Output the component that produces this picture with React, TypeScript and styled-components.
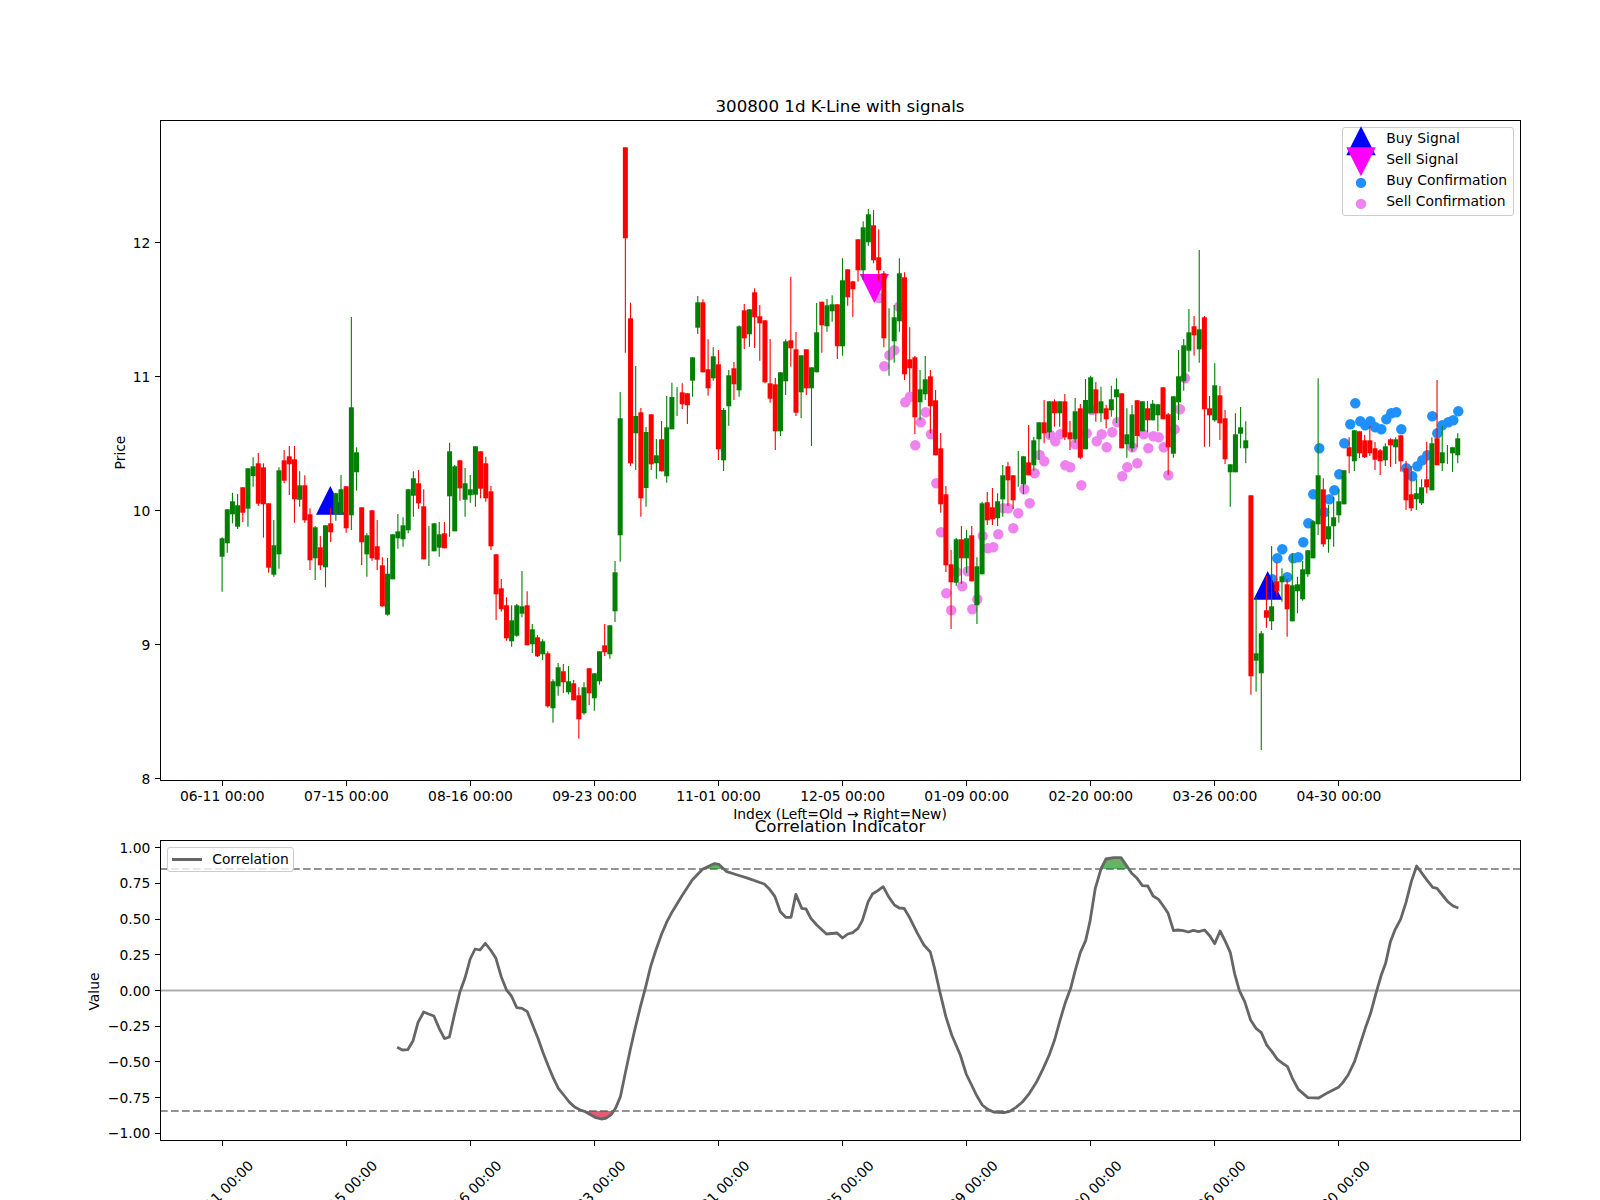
import React from 'react';
import styled, { createGlobalStyle } from 'styled-components';

// one row per trading day: colour, wick top, body top, body bottom, wick bottom (px)
type Candle = ['g' | 'r', number, number, number, number];

const candles: Candle[] = [
  ['g',537.3,538.3,556.7,591.7],['g',509.3,509.3,543.3,552.7],['g',492.7,501.3,514.3,523.3],['g',494,505.3,526.7,529],
  ['r',487.3,487.3,512.7,522],['g',468.3,468.3,508.7,526.7],['g',457.3,466.3,476,486.7],['r',453,463.3,503.7,506],
  ['r',463.3,467.3,504.3,537.7],['r',503.3,503.3,567.7,572.7],['g',520,545.3,574.7,576.7],['g',467.3,470.3,554.3,568.7],
  ['r',450,460.3,480.7,483.3],['r',446,456.3,464.3,495],['r',446,459.3,499.3,522.7],['g',471.3,485.3,499.7,506.7],
  ['r',475.3,485.3,520.3,522.7],['r',508.3,514.3,560.3,570],['g',526,527.3,558.3,580],['r',536,547.3,565.3,570],
  ['g',525.3,525.3,567.3,587.3],['r',508,523.3,532.3,542],['g',492.7,493.3,514.3,520.7],['g',475,489.3,514.3,514.3],
  ['r',486.3,486.3,528.3,532.7],['g',317,407.3,515.3,530],['g',447.3,452.3,472.3,490.7],['r',507.3,507.3,542.3,565],
  ['g',533.3,535.3,554.3,576.7],['r',510.3,510.3,558.3,560.7],['r',520,546.3,559.7,570],['r',557.3,565.3,606.3,606.7],
  ['g',558,573.7,614.7,615.7],['g',534.3,534.3,579.3,579.3],['g',514,531.3,538.3,548.7],['g',517.3,525.3,539.3,546.7],
  ['g',489.3,489.3,530.3,533.3],['g',471.3,478.3,495.7,516.7],['r',470,483.3,503.3,508.7],['r',489.3,506.3,559.3,559.3],
  ['g',526,546,546,566],['g',523.3,523.3,551.3,551.3],['g',522,534.3,547.7,556.7],['r',522,533.3,548.3,548.3],
  ['g',442.7,451.3,496.3,536.7],['g',465,466.3,531.3,531.3],['r',460.3,460.3,488.3,500.7],['g',468,483.3,499.7,516.7],
  ['g',475,489.3,495.3,502.7],['g',446,446.3,494.7,506.7],['r',451.3,451.3,488.7,498.3],['r',456.7,463.3,498.3,501.7],
  ['r',486,491.3,546.3,550],['r',554.3,554.3,594.3,620],['r',579,588.3,609.3,611.7],['r',597.3,605.3,638.3,640.7],
  ['g',605.3,620.3,641.3,646.7],['g',604,605.3,635.7,636.7],['g',571,606.3,613.7,617.3],['r',591.3,605.3,645.3,645.3],
  ['g',624,629.3,644.3,653],['r',635,637.3,656.3,657],['g',639.3,641.3,654.3,660],['r',651.3,653.3,706.3,707.7],
  ['g',679.3,681.3,708.3,722.7],['g',663,667.3,686.3,695.7],['r',664,671.3,682.3,693],['g',666,681.3,692.3,694.3],
  ['r',680,683.3,700.3,700.3],['r',687.3,695.3,719.3,738.7],['g',682.3,687.3,713.3,714.7],['r',668.3,668.3,693.3,705],
  ['g',673.3,673.3,698.3,710.7],['g',651.3,651.3,681.3,684.7],['r',624,645.3,652.3,656],['g',625.3,625.3,654.3,658.7],
  ['g',561,572.3,611.3,622],['g',392,418.3,535.3,561.7],['r',147.3,147.3,238.3,352.7],['r',302.7,318.3,463.3,466],
  ['g',366,416,433.3,470],['r',408,412.3,498.3,516.7],['g',427,432,488,506.7],['r',414,414.3,464.3,470],
  ['g',439,455.3,463.3,478.7],['r',421,439.3,471.3,471.3],['g',396,427.3,476.3,482.7],['g',382.7,397,429.3,429.3],
  ['g',387,401,401,416],['r',383.3,392.3,404.3,409],['r',393.3,393.3,405.3,424],['g',357.3,357.3,380.7,396.7],
  ['g',296,302.3,327.7,334],['r',299.3,302.3,372.3,372.3],['r',339.3,369.3,388.3,395.7],['g',347.3,356.3,378.3,380.7],
  ['r',350,364.3,449.3,460],['g',408,410,460.3,471],['g',370,375.3,406.3,425.7],['r',362,368.3,384.3,400],
  ['g',325.3,326.3,390.3,396.7],['r',304,310.3,338.3,349],['g',309.3,309.3,334.3,346.7],['r',288.3,292.3,317.3,348],
  ['r',305,316.3,323.3,360.7],['r',320.3,320.3,382.3,383.3],['r',339,383.3,398.7,402.7],['r',378,384.3,431.3,450],
  ['g',372.3,372.3,431.3,436],['g',339.3,341.3,381.3,395],['r',276.7,340.3,348.3,366.7],['r',332,349.3,412.7,416],
  ['g',355.3,355.3,392.3,418],['r',349.3,349.3,388.3,395],['g',367.3,367.3,388.3,446],['g',303,332.3,372.3,372.3],
  ['r',301.7,301.7,325.3,352.7],['g',299,305.3,326.3,331.7],['g',295.3,304.3,311.3,321.7],['r',304.3,304.3,346.3,359],
  ['g',258.3,280.3,346.3,355.7],['r',269.3,269.3,297.3,305.7],['r',281.3,281.3,289.3,317],['r',239.3,239.3,270.3,281.7],
  ['g',221.3,227.3,270.3,280],['g',209,214.3,242.3,245.7],['r',210,225.3,260.3,263.3],['r',229.3,257.3,270.3,281],
  ['r',271,273.3,338.3,347.3],['g',308.3,342,342,375.7],['g',305,317.3,341.3,362.7],['g',258.3,273.3,321.3,331.7],
  ['r',272.3,277.3,374.3,380],['r',327.3,359.3,368.3,391.7],['r',356,357.3,417.3,434],['g',370,389.3,402.3,420],
  ['g',356,379.3,394.3,400],['r',370,376.3,406.3,433.3],['r',390,400.3,455.3,455.3],['r',433,448.3,504.3,512.7],
  ['r',486,494.3,565.3,572],['r',550,564.3,582.3,629],['g',538,539.3,582.7,585.7],['r',526,539.3,558.3,584],
  ['g',530,538.3,558.3,573],['r',526,535.3,581.3,581.3],['g',557.3,566.3,605.3,624],['g',501.7,503.3,574.3,574.3],
  ['r',492,502.3,520.3,525],['r',488,507.3,519.3,525],['g',493.3,501.3,518.3,526],['g',465,475.3,499.3,516.7],
  ['r',462,466.3,480.3,506],['r',475.3,475.3,500.3,509],['g',451,468,468,486.7],['g',456.3,456.3,484.3,494.3],
  ['r',425,462.3,475.3,475.3],['g',437,440.3,465.3,470.7],['g',422.3,422.3,439.3,460],['r',400,422.3,433.3,443.3],
  ['g',401.3,401.3,432.3,438.3],['r',399.3,401.3,413.3,426.7],['g',401.3,401.3,413.3,426.7],['r',394,401.3,437.3,440],
  ['r',421,432.3,439.3,450],['g',398,411.3,439.3,442.7],['r',404,408.3,457.7,459.3],['g',379,400,449.3,449.3],
  ['g',375.7,377.3,413.3,413.3],['r',382,389.3,413.3,421.7],['g',386.7,401.3,413.3,422],['r',405,408.3,419.3,428.3],
  ['g',385.7,399.3,410.3,416.7],['g',378.3,389.3,397.3,423],['r',393.3,393.3,448.3,448.3],['g',408.3,434.3,444.3,457.7],
  ['g',405,414.3,448.3,451.7],['r',400,400.3,436,447.3],['g',401.3,401.3,431.3,431.3],['r',401,408.3,420.3,432.3],
  ['g',400,403.7,420.3,420.3],['g',404,404.3,415.3,431.3],['r',387,387.3,419.3,419.3],['r',413,414.3,447.3,475],
  ['g',396.3,396.3,453.7,457.7],['g',350,376.3,402.3,420],['g',339,345.3,381.3,390.7],['g',309,332.3,350.7,371.7],
  ['r',316,326.3,335.3,355.7],['g',250,329.3,349.3,362.7],['r',316,317.3,409.3,446.7],['r',396,408.3,415.3,446.7],
  ['g',363.3,385.3,420.3,421.7],['r',386,395.3,423.3,440],['r',410,418.3,459.3,464],['g',464.3,464.3,472.3,506.7],
  ['g',413.3,434.3,472.3,472.3],['g',407,427.3,433.7,448.3],['g',421.3,440.3,448.3,463.3],['r',495.3,495.3,676.3,694.7],
  ['g',596.7,653.3,660.7,691.7],['g',631,633.3,673.3,750],['r',576,610.3,617.7,627.7],['g',546,606.3,621.3,630],
  ['r',562.7,581.3,591.3,596.7],['g',568.3,576.3,582.3,601.7],['r',579,584.3,609.3,636.7],['g',553.3,585.3,621.3,621.3],
  ['g',576.7,584.3,591.3,613.3],['g',561,569.3,599.3,600.7],['g',550.3,550.3,574.3,576.7],['g',520,521.3,558.3,558.3],
  ['g',378.3,475.3,524.3,535],['r',478.3,489.3,544.3,546.7],['g',505,526.3,539.3,552.7],['g',497,517.3,526.3,546.7],
  ['g',489.3,501.3,515.3,522.7],['g',470.3,470.3,504.3,504.3],['r',437.3,447.3,456.3,473.3],['g',430.3,430.3,461.3,471],
  ['r',431.3,431.3,453.3,458],['r',435,440.3,457.3,458],['r',426,440.3,453.3,456],['r',442,448.3,459.7,470],
  ['r',449,450.3,461.3,475],['g',443.3,446.3,460.3,466],['r',438.3,439.3,445.3,466.7],['g',437.3,439.3,447.3,464],
  ['r',435.3,435.3,461.3,471.7],['r',461,468.3,500.3,510],['r',466,494.3,508.3,511],['g',479.3,493.3,499.3,510],
  ['g',479.3,487.3,503.3,505],['r',441.7,479.3,487.3,493.3],['g',437.3,443.3,490.3,490.3],['r',380,438.3,465.3,465.3],
  ['g',426,452.3,463.3,471],['g',445,455,455,464],['g',446.7,447.3,453.3,472],['g',433.3,438.3,455.3,463.3],
];

const sellDots = [
  [879,298],[884.3,366.3],[889.3,355.3],[894.3,350.3],[899,306.7],[905.3,402.3],[910,396.7],[915.3,445.3],[920.7,422.3],
  [925.7,412.3],[931,434.3],[936.3,483.3],[941,532.3],[946.3,593.3],[951.3,610.3],[956.7,572],[962.3,586.3],[967.7,571.3],
  [972.3,609.3],[977.3,599.3],[982.7,536],[987.7,548.3],[993.3,547.3],[998.3,534.3],[1003.3,508.3],[1008.3,508.3],
  [1013.3,528.3],[1018.3,513.3],[1024.3,489.3],[1029.7,503.3],[1034.7,473.3],[1039.7,455],[1044.3,461.3],[1050.3,435],
  [1055.3,441.3],[1060.3,434.3],[1065.3,465.3],[1070.3,467.3],[1075.3,444.3],[1081.3,485.3],[1086.7,433.3],[1091.7,410],
  [1096.7,441.3],[1101.7,434.3],[1106.7,447.3],[1112.3,432.3],[1117.3,422.3],[1122.3,476.3],[1127.3,467.3],[1132.3,447.3],
  [1137.3,463.3],[1143.7,434.3],[1148.3,448.3],[1153.3,436.3],[1158.7,437.3],[1163.7,447.3],[1168.3,475.3],[1174.7,429.3],
  [1180,409.3],[1185,378.3],
];

const buyDots = [
  [1272.3,579.3],[1277.3,558.3],[1282.3,549.3],[1287.3,577.3],[1293.3,558.3],[1298.3,557.3],[1303.3,542.3],[1308.3,523.3],
  [1313.3,494.3],[1319.3,448.3],[1324.3,512.3],[1329.3,499.3],[1334.3,490.3],[1339.3,474.3],[1344.3,443.3],[1350.3,424.3],
  [1355.3,403.3],[1360.3,421.3],[1365.3,425.3],[1370.3,421.3],[1375.3,427.3],[1381.3,429.3],[1386.3,419.3],[1391.3,413.3],
  [1396.3,412.3],[1401.3,429.3],[1406.3,468.3],[1412.3,476.3],[1417.3,466.3],[1422.3,460.3],[1427.3,455.3],[1432.3,416.3],
  [1437.3,433.3],[1442.3,425.3],[1448.3,422.3],[1453.3,420.3],[1458.3,411.3],
];

// correlation curve, traced in two stretches
const curveLeft = [
  [777,802],[790,810],[803,809],[816,782],[828,728],[842,696],[854,702],[867,708],[880,745],[893,776],[905,771],[918,700],
  [931,635],[943,595],[956,537],[968,507],[980,510],[993,490],[1006,510],[1019,535],[1032,590],[1045,630],[1057,648],
  [1070,683],[1083,685],[1096,695],[1109,735],[1122,775],[1135,820],[1148,860],[1160,895],[1172,925],[1187,948],[1200,968],
  [1213,982],[1226,990],[1238,995],[1251,1004],[1264,1013],[1277,1017],[1290,1014],[1302,1003],[1312,985],[1324,950],
  [1335,885],[1348,810],[1360,745],[1373,680],[1385,625],[1398,560],[1411,510],[1425,462],[1438,425],[1451,395],[1476,345],
  [1500,300],[1525,268],[1553,251],
].map(([x, y]) => [80 + x / 2.45, 780 + y / 3]);

const curveRight = [
  [27,251],[35,253],[50,275],[70,285],[90,295],[120,312],[130,328],[140,350],[150,395],[160,412],[170,412],[179,343],[190,385],
  [198,387],[207,415],[218,435],[236,462],[256,459],[266,474],[276,462],[285,458],[295,445],[303,422],[314,365],[322,342],
  [332,332],[342,320],[352,350],[363,375],[372,384],[381,385],[392,415],[406,460],[418,495],[430,516],[438,565],[447,630],
  [459,710],[470,765],[486,825],[497,882],[507,915],[516,945],[527,975],[537,988],[548,996],[568,998],[578,994],[590,982],
  [602,966],[615,940],[628,907],[640,868],[652,825],[662,780],[672,722],[682,668],[692,625],[700,575],[710,518],[720,482],
  [728,425],[738,325],[749,265],[758,237],[772,233],[786,233],[796,256],[806,280],[816,295],[826,317],[836,318],[846,348],
  [856,358],[865,378],[874,400],[884,452],[892,450],[902,452],[912,456],[921,451],[931,455],[942,450],[952,468],[961,491],
  [971,453],[981,485],[990,517],[998,580],[1007,632],[1017,665],[1028,720],[1038,745],[1048,758],[1058,795],[1068,815],
  [1078,838],[1088,850],[1097,860],[1106,895],[1117,928],[1135,953],[1155,954],[1172,938],[1192,922],[1200,908],[1210,885],
  [1222,845],[1232,795],[1242,745],[1252,700],[1262,640],[1272,585],[1280,550],[1289,485],[1298,448],[1308,418],[1318,368],
  [1328,305],[1338,258],[1348,280],[1358,302],[1368,322],[1376,325],[1386,345],[1396,365],[1406,378],[1416,384],
].map(([x, y]) => [700 + x / 1.867, 780 + y / 3]);

const curve = [...curveLeft, ...curveRight];

const dateLabels = ['06-11', '07-15', '08-16', '09-23', '11-01', '12-05', '01-09', '02-20', '03-26', '04-30'];
const tickX = (i: number) => 222.3 + i * 124.07;
const candleX = (i: number) => 222.1 + i * 5.17;
const priceY = (p: number) => 510.3 - 134 * (p - 10);
const valueY = (v: number) => 990.5 - 142.7 * v;
const snap = (n: number) => Math.floor(n) + 0.5;
const toPoints = (pts: number[][]) => pts.map((p) => p.join(',')).join(' ');

// stretches of the curve that go past a level, closed along that level
function pastLevel(level: number, above: boolean) {
  const out: number[][][] = [];
  let run: number[][] = [];
  curve.forEach(([x, y], i) => {
    const past = above ? y < level : y > level;
    if (past) {
      if (!run.length && i > 0) {
        const [px, py] = curve[i - 1];
        run.push([px + ((level - py) / (y - py)) * (x - px), level]);
      }
      run.push([x, y]);
    } else if (run.length) {
      const [px, py] = curve[i - 1];
      run.push([px + ((level - py) / (y - py)) * (x - px), level]);
      out.push(run);
      run = [];
    }
  });
  return out;
}

const GlobalStyle = createGlobalStyle`
  html, body {
    margin: 0;
    padding: 0;
    background: #fff;
    overflow: hidden;
  }
  body {
    font-family: "DejaVu Sans", sans-serif;
  }
`;

const Figure = styled.div`
  width: 1600px;
  height: 1200px;
  display: flex;
  flex-direction: column;
  overflow: hidden;
`;

const Panel = styled.section<{ $height: number }>`
  position: relative;
  flex: 0 0 ${({ $height }) => $height}px;
`;

const ChartSvg = styled.svg`
  display: block;
  width: 1600px;
  height: 100%;
  overflow: visible;
`;

const AxesFrame = styled.rect`
  fill: none;
  stroke: #000;
  stroke-width: 1;
`;

const Tick = styled.line`
  stroke: #000;
  stroke-width: 1;
`;

const Label = styled.text<{ $anchor?: string }>`
  font-family: "DejaVu Sans", sans-serif;
  font-size: 13.89px;
  fill: #000;
  text-anchor: ${({ $anchor }) => $anchor || 'middle'};
`;

const Title = styled(Label)`
  font-size: 16.67px;
`;

const RefLine = styled.line<{ $dashed?: boolean }>`
  stroke: ${({ $dashed }) => ($dashed ? '#939393' : '#adadad')};
  stroke-width: 2.1;
  stroke-dasharray: ${({ $dashed }) => ($dashed ? '7.7 3.3' : 'none')};
`;

const CurveLine = styled.polyline`
  fill: none;
  stroke: #666;
  stroke-width: 2.8;
  stroke-linejoin: round;
`;

const Legend = styled.div<{ $top: number; $left: number }>`
  position: absolute;
  top: ${({ $top }) => $top}px;
  left: ${({ $left }) => $left}px;
  box-sizing: border-box;
  background: rgba(255, 255, 255, 0.8);
  border: 1px solid #ccc;
  border-radius: 3px;
  font-size: 13.89px;
  color: #000;
`;

const SignalLegend = styled(Legend)`
  width: 171.5px;
  height: 88.5px;
  padding-left: 3px;
  display: flex;
  flex-direction: column;
`;

const CorrelationLegend = styled(Legend)`
  width: 127.3px;
  height: 24.8px;
  padding-left: 4.3px;
  display: flex;
  align-items: center;
  gap: 10.5px;
`;

const LegendRow = styled.div`
  display: flex;
  align-items: center;
  height: 20.9px;
  gap: 10px;
  white-space: nowrap;
`;

const LegendMark = styled.svg`
  flex: 0 0 30px;
  width: 30px;
  height: 20.9px;
  overflow: visible;
`;

const LegendStroke = styled.span`
  flex: 0 0 29.4px;
  height: 3px;
  background: #666;
`;

const legendRows = [
  { label: 'Buy Signal', mark: <polygon points="15,-1.7 29.7,27.3 0.3,27.3" fill="#0000ff" /> },
  { label: 'Sell Signal', mark: <polygon points="0.3,-1.7 29.7,-1.7 15,27.3" fill="#ff00ff" /> },
  { label: 'Buy Confirmation', mark: <circle cx="15" cy="12.9" r="5.2" fill="#1e90ff" /> },
  { label: 'Sell Confirmation', mark: <circle cx="15" cy="12.9" r="5.2" fill="#ee82ee" /> },
];

const PriceChart = () => (
  <ChartSvg viewBox="0 0 1600 820">
    <Title x={840} y={111.7}>300800 1d K-Line with signals</Title>
    {sellDots.map(([x, y]) => <circle key={x} cx={x} cy={y} r={5.2} fill="#ee82ee" />)}
    {buyDots.map(([x, y]) => <circle key={x} cx={x} cy={y} r={5.2} fill="#1e90ff" />)}
    <polygon points="330.3,486 344.7,514.7 316,514.7" fill="#0000ff" />
    <polygon points="1267.7,571 1282.3,599.7 1253.3,599.7" fill="#0000ff" />
    <polygon points="859.7,274 889,274 874.3,303" fill="#ff00ff" />
    {candles.map(([c, high, top, bottom, low], i) => {
      const x = candleX(i);
      const color = c === 'g' ? '#008000' : '#ff0000';
      return (
        <g key={i} fill={color} stroke={color}>
          <line x1={x} x2={x} y1={high} y2={low} strokeWidth={1.1} />
          {bottom > top && <rect x={x - 2.5} y={top} width={5} height={bottom - top} stroke="none" />}
        </g>
      );
    })}
    <AxesFrame x={160.5} y={120.5} width={1360} height={660} />
    {[8, 9, 10, 11, 12].map((p) => (
      <g key={p}>
        <Tick x1={155} x2={160} y1={snap(priceY(p))} y2={snap(priceY(p))} />
        <Label $anchor="end" x={150.3} y={priceY(p) + 5.5}>{p}</Label>
      </g>
    ))}
    {dateLabels.map((d, i) => (
      <g key={d}>
        <Tick x1={snap(tickX(i))} x2={snap(tickX(i))} y1={781} y2={786} />
        <Label x={tickX(i)} y={801}>{d} 00:00</Label>
      </g>
    ))}
    <Label x={840} y={819}>Index (Left=Old → Right=New)</Label>
    <Label transform="rotate(-90 119.5 452.5)" x={119.5} y={457.5}>Price</Label>
  </ChartSvg>
);

const IndicatorChart = () => (
  <ChartSvg viewBox="0 820 1600 380">
    <Title x={840} y={832}>Correlation Indicator</Title>
    <RefLine x1={160} x2={1520} y1={valueY(0)} y2={valueY(0)} />
    <RefLine $dashed x1={160} x2={1520} y1={869} y2={869} />
    <RefLine $dashed x1={160} x2={1520} y1={1111} y2={1111} />
    {pastLevel(869, true).map((run, i) => (
      <polygon key={i} points={toPoints(run)} fill="#008000" fillOpacity={0.6} />
    ))}
    {pastLevel(1111, false).map((run, i) => (
      <polygon key={i} points={toPoints(run)} fill="#dc143c" fillOpacity={0.7} />
    ))}
    <CurveLine points={toPoints(curve)} />
    <AxesFrame x={160.5} y={840.5} width={1360} height={300} />
    {[1, 0.75, 0.5, 0.25, 0, -0.25, -0.5, -0.75, -1].map((v) => (
      <g key={v}>
        <Tick x1={155} x2={160} y1={snap(valueY(v))} y2={snap(valueY(v))} />
        <Label $anchor="end" x={150.3} y={valueY(v) + 5}>
          {v < 0 ? '\u2212' : ''}{Math.abs(v).toFixed(2)}
        </Label>
      </g>
    ))}
    {dateLabels.map((d, i) => {
      const cx = tickX(i) - 1.5;
      return (
        <g key={d}>
          <Tick x1={snap(tickX(i))} x2={snap(tickX(i))} y1={1141} y2={1146} />
          <Label transform={`rotate(-45 ${cx} 1193)`} x={cx} y={1198}>{d} 00:00</Label>
        </g>
      );
    })}
    <Label transform="rotate(-90 93.5 991.5)" x={93.5} y={996.5}>Value</Label>
  </ChartSvg>
);

export default function App() {
  return (
    <Figure>
      <GlobalStyle />
      <Panel $height={820}>
        <PriceChart />
        <SignalLegend $top={127} $left={1342.3}>
          {legendRows.map((row) => (
            <LegendRow key={row.label}>
              <LegendMark viewBox="0 0 30 20.9">{row.mark}</LegendMark>
              {row.label}
            </LegendRow>
          ))}
        </SignalLegend>
      </Panel>
      <Panel $height={380}>
        <IndicatorChart />
        <CorrelationLegend $top={27} $left={167}>
          <LegendStroke />
          Correlation
        </CorrelationLegend>
      </Panel>
    </Figure>
  );
}
